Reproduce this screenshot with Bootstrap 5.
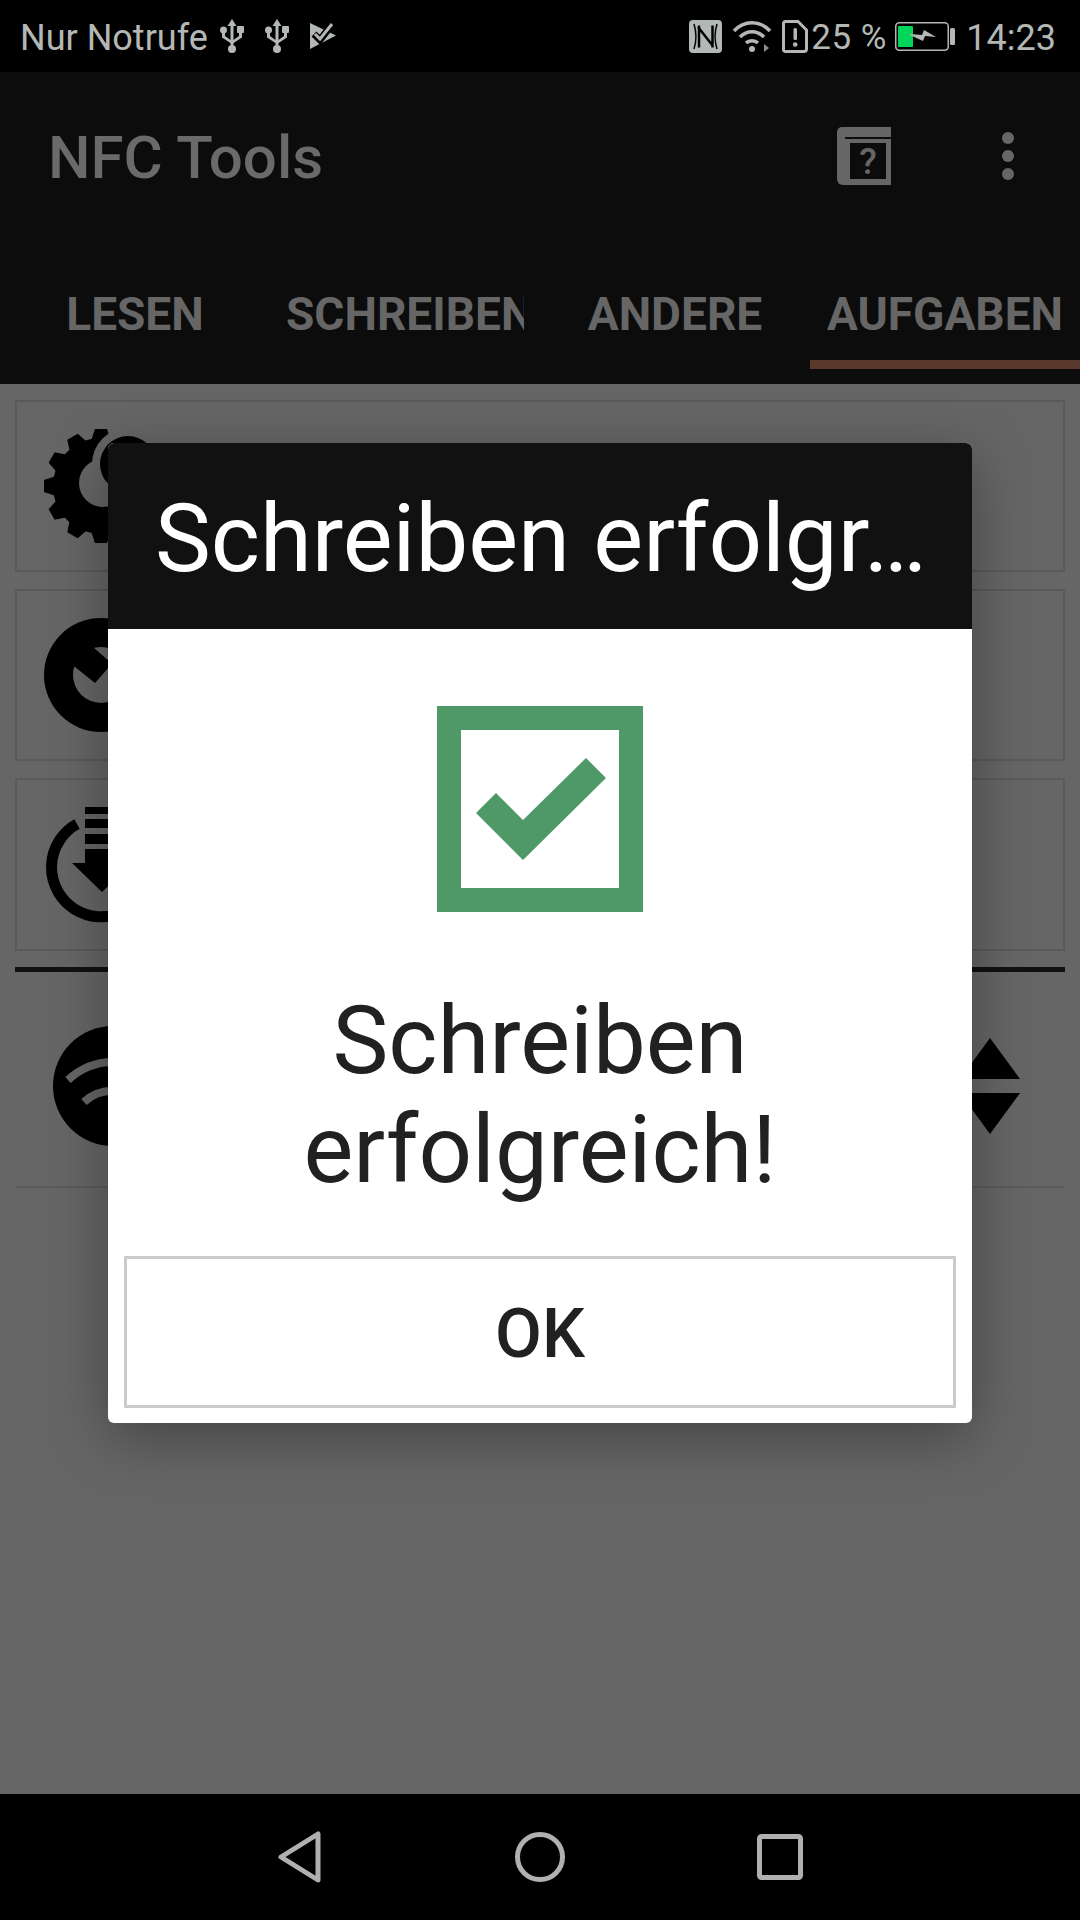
<!DOCTYPE html>
<html lang="de">
<head>
  <meta charset="UTF-8" />
  <title>NFC Tools</title>
  <link href="https://cdn.jsdelivr.net/npm/bootstrap@5.3.3/dist/css/bootstrap.min.css" rel="stylesheet" />
  <style>
    body { width: 1080px; height: 1920px; overflow: hidden; font-family: Roboto, "Liberation Sans", sans-serif; background: #666; }
    svg { display: block; flex: none; }

    .status-bar { height: 72px; background: #000; color: #b4b8b5; font-size: 36px; padding-left: 20px; }
    .status-text { line-height: 72px; padding-top: 3px; }
    .percent { font-size: 35px; margin-left: 3px; width: 84px; letter-spacing: .5px; white-space: nowrap; }
    .clock { margin-left: 11px; }

    .app-bar { height: 168px; background: #0c0c0c; padding-left: 48px; color: #6a6a6a; }
    .app-title { font-size: 60px; font-weight: 500; line-height: 1; margin-top: 4px; }
    .tab-strip { height: 144px; background: #0c0c0c; padding-bottom: 15px; }
    .tab-item { height: 129px; padding: 51px 16px 0; color: #666; font-size: 46px; font-weight: 700; line-height: 1; white-space: nowrap; text-align: center; }
    .tab-item.current { border-bottom: 9px solid #58382a; }
    .tab-label-cut { overflow: hidden; }

    .task-list { padding: 16px 15px 0; flex: 1 1 auto; background: #666; }
    .task-box { height: 172px; border: 2px solid #5a5a5a; margin-bottom: 17px; padding-left: 27px; }
    .task-box.third { height: 173px; margin-bottom: 16px; }
    .thick-line { height: 5px; background: #111; }
    .wifi-row { height: 216px; border-bottom: 2px solid #5c5c5c; padding: 14px 45px 0 38px; }

    .dialog-layer { position: fixed; inset: 0; padding-top: 443px; }
    .dialog-box { width: 864px; height: 980px; background: #fff; border-radius: 6px; overflow: hidden; box-shadow: 0 14px 60px rgba(0, 0, 0, .35); }
    .dialog-head { height: 186px; background: #111; color: #fff; font-size: 94px; line-height: 192px; padding-left: 47px; white-space: nowrap; overflow: hidden; }
    .check-icon { margin: 77px auto 0; }
    .dialog-text { color: #212121; font-size: 94px; line-height: 109px; margin-top: 75px; text-align: center; }
    .ok-btn { width: 832px; height: 152px; margin: 51px 16px 0; padding-top: 10px; border: 3px solid #ccc; border-radius: 0; background: #fff; color: #212121; font-size: 68px; font-weight: 500; line-height: 1; }

    .nav-keys { height: 126px; background: #000; }
    .nav-keys svg { position: absolute; left: 0; top: 0; }
  </style>
</head>
<body>
  <div class="d-flex flex-column vh-100">

    <!-- Status bar -->
    <div class="status-bar d-flex align-items-center flex-none">
      <span class="status-text">Nur Notrufe</span>
      <svg style="margin-left:12px" width="24" height="34" viewBox="0 0 24 34" fill="#b4b8b5">
        <path d="M12 0l4.500 7h-3v19h-3V7h-3z"/><circle cx="12" cy="30" r="4"/>
        <circle cx="3.500" cy="11" r="3.500"/><rect x="17" y="7" width="7" height="7" rx="1"/>
        <path d="M2 13h3v4l7 5v3l-10-6.500zM19 13h3v5.500l-10 6.500v-3l7-5z"/>
      </svg>
      <svg style="margin-left:21px" width="24" height="34" viewBox="0 0 24 34" fill="#b4b8b5">
        <path d="M12 0l4.500 7h-3v19h-3V7h-3z"/><circle cx="12" cy="30" r="4"/>
        <circle cx="3.500" cy="11" r="3.500"/><rect x="17" y="7" width="7" height="7" rx="1"/>
        <path d="M2 13h3v4l7 5v3l-10-6.500zM19 13h3v5.500l-10 6.500v-3l7-5z"/>
      </svg>
      <svg style="margin-left:21px" width="26" height="28" viewBox="0 0 26 28">
        <path d="M0 1l26 12.500L0 27z" fill="#b4b8b5"/>
        <path d="M4 12l6 6L23 1" fill="none" stroke="#000" stroke-width="7"/>
        <path d="M5 12l5 5L22 2" fill="none" stroke="#b4b8b5" stroke-width="3"/>
      </svg>

      <svg class="ms-auto" width="33" height="33" viewBox="0 0 33 33">
        <rect width="33" height="33" rx="4" fill="#b4b8b5"/>
        <path d="M10 5.500v22M9 7l15 19M23.500 5.500v22" fill="none" stroke="#000" stroke-width="2.500"/>
        <path d="M5 4c2.500 8 2.500 17 0 25M28 4c-2.500 8-2.500 17 0 25" fill="none" stroke="#000" stroke-width="1.500"/>
      </svg>
      <svg style="margin-left:10px" width="40" height="33" viewBox="0 0 40 33" fill="none" stroke="#b4b8b5" stroke-width="3.500">
        <path d="M2 11c10-11 26-11 36 0M8 17c7-7 17-7 24 0M14 23c3-3 9-3 12 0"/>
        <circle cx="20" cy="29" r="3" fill="#b4b8b5" stroke="none"/>
        <path d="M32 24v8l5-4z" fill="#8d908e" stroke="none"/>
      </svg>
      <svg style="margin-left:10px" width="26" height="33" viewBox="0 0 26 33">
        <path d="M3 1.500h13l8.500 8.500v19a2.500 2.500 0 0 1-2.500 2.500H3A2 2 0 0 1 1.500 29V3A2 2 0 0 1 3 1.500z" fill="none" stroke="#b4b8b5" stroke-width="3"/>
        <rect x="11.500" y="8" width="3.500" height="12" rx="1.500" fill="#b4b8b5"/><circle cx="13.200" cy="24.500" r="2.300" fill="#b4b8b5"/>
      </svg>
      <span class="percent status-text">25 %</span>
      <svg width="60" height="29" viewBox="0 0 60 29">
        <rect x=".75" y=".75" width="52.500" height="27.500" rx="3.500" fill="none" stroke="#b4b8b5" stroke-width="1.500"/>
        <rect x="3" y="4" width="15" height="21" rx="1" fill="#00d65a"/>
        <path d="M15 12l12 1 2-5 12 7-11-1-2 5-13-6z" fill="#b4b8b5"/>
        <rect x="55" y="6" width="5" height="17" rx="1.500" fill="#b4b8b5"/>
      </svg>
      <span class="status-text clock pe-4">14:23</span>
    </div>

    <!-- App bar -->
    <div class="app-bar d-flex align-items-center">
      <span class="app-title">NFC Tools</span>
      <svg class="ms-auto" width="54" height="58" viewBox="0 0 54 58">
        <path d="M5 0h49v58H6a6 6 0 0 1-6-6V5a5 5 0 0 1 5-5z" fill="#666"/>
        <path d="M8 10h46v2H8zM13 16h36v36H13z" fill="#0c0c0c"/>
        <text x="31" y="47" text-anchor="middle" font-family="Roboto, sans-serif" font-size="36" font-weight="500" fill="#666">?</text>
      </svg>
      <svg style="margin-left:110px;margin-right:65px" width="14" height="50" viewBox="0 0 14 50" fill="#666">
        <circle cx="7" cy="7" r="6"/><circle cx="7" cy="25" r="6"/><circle cx="7" cy="43" r="6"/>
      </svg>
    </div>

    <!-- Tabs -->
    <div class="tab-strip row g-0 flex-none">
      <div class="col-3 tab-item">LESEN</div>
      <div class="col-3 tab-item"><div class="tab-label-cut">SCHREIBEN</div></div>
      <div class="col-3 tab-item">ANDERE</div>
      <div class="col-3 tab-item current">AUFGABEN</div>
    </div>

    <!-- Task list behind the dialog -->
    <div class="task-list">
      <div class="task-box d-flex align-items-center">
        <svg width="130" height="116" viewBox="-57 -58 130 116">
          <defs>
            <polygon id="gearTooth" points="-57,-6 -45,-10 45,-10 57,-6 57,6 45,10 -45,10 -57,6" />
          </defs>
          <circle r="48" fill="#000"/>
          <use href="#gearTooth"/>
          <use href="#gearTooth" transform="rotate(30)"/>
          <use href="#gearTooth" transform="rotate(60)"/>
          <use href="#gearTooth" transform="rotate(90)"/>
          <use href="#gearTooth" transform="rotate(120)"/>
          <use href="#gearTooth" transform="rotate(150)"/>
          <circle cx="2" cy="-3" r="24" fill="#666"/>
          <circle cx="27" cy="-22" r="36" fill="#666"/>
          <circle cx="27" cy="-22" r="28" fill="#000"/>
        </svg>
      </div>
      <div class="task-box d-flex align-items-center">
        <svg width="130" height="116" viewBox="44 617 130 116">
          <defs>
            <clipPath id="checkHole"><circle cx="101" cy="675" r="29"/></clipPath>
          </defs>
          <circle cx="101" cy="675" r="57" fill="#000"/>
          <circle cx="101" cy="675" r="28" fill="#666"/>
          <path d="M60 620h70v27H93l17 15v4l-15 17-20-16-15-12z" fill="#000" clip-path="url(#checkHole)"/>
        </svg>
      </div>
      <div class="task-box third d-flex align-items-center">
        <svg width="130" height="120" viewBox="44 804 130 120">
          <path d="M77 823A49.500 49.500 0 1 0 150.500 868" fill="none" stroke="#000" stroke-width="11"/>
          <path d="M85 806h34v7H85zM85 818h34v9H85zM85 833h34v10H85zM85 848h34v14h13l-30 29-30-29h13z" fill="#000"/>
        </svg>
      </div>
      <div class="thick-line"></div>
      <div class="wifi-row d-flex align-items-center justify-content-between">
        <svg width="120" height="120" viewBox="53 1025 120 120">
          <circle cx="113" cy="1085" r="60" fill="#000"/>
          <path d="M68 1079c26-24 64-24 90 0M84 1101c16-15 42-15 58 0" fill="none" stroke="#666" stroke-width="8"/>
        </svg>
        <svg width="60" height="96" viewBox="0 0 60 96" fill="#000">
          <path d="M30 0l30 41H0zM0 55h60L30 96z"/>
        </svg>
      </div>
    </div>

    <!-- Navigation keys -->
    <div class="nav-keys position-relative flex-none">
      <svg width="1080" height="126" viewBox="0 0 1080 126" fill="none" stroke="#b0b0b0" stroke-width="5" stroke-linejoin="round">
        <path d="M281 63l37-23v46z"/>
        <circle cx="540" cy="63" r="22.500"/>
        <rect x="759.500" y="42.500" width="41" height="41" rx="2"/>
      </svg>
    </div>
  </div>

  <!-- Dialog -->
  <div class="dialog-layer d-flex justify-content-center align-items-start">
    <div class="dialog-box">
      <div class="dialog-head">Schreiben erfolgr…</div>
      <svg class="check-icon" width="206" height="206" viewBox="0 0 206 206">
        <path d="M0 0h206v206H0zM24 24v158h158V24z" fill="#4f9868" fill-rule="evenodd"/>
        <path d="M39 107l20-20 27 27 63-62 20 20-83 82z" fill="#4f9868"/>
      </svg>
      <div class="dialog-text">Schreiben<br />erfolgreich!</div>
      <button type="button" class="btn ok-btn">OK</button>
    </div>
  </div>

  <script src="https://cdn.jsdelivr.net/npm/bootstrap@5.3.3/dist/js/bootstrap.bundle.min.js"></script>
</body>
</html>
